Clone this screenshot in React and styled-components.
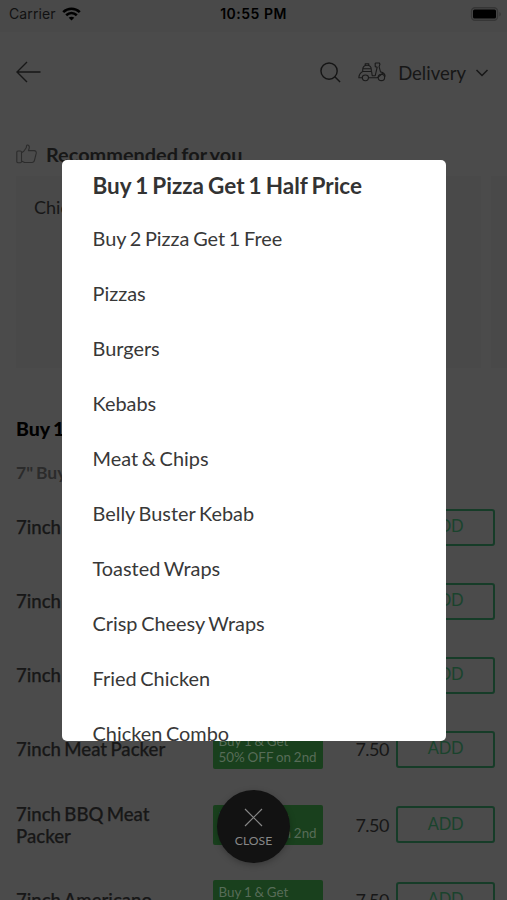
import React from 'react';
import styled, { createGlobalStyle, css } from 'styled-components';

const GlobalStyle = createGlobalStyle`
    body {
        margin: 0;
        overflow: hidden;
        font-family: Lato, sans-serif;
        word-spacing: -1.4px;
    }
    * {
        box-sizing: border-box;
    }
`;

const Screen = styled.div`
    position: relative;
    width: 507px;
    height: 900px;
    overflow: hidden;
    background-color: #4b4b4b;
    color: #171717;
`;

const StatusBar = styled.div`
    display: grid;
    grid-template-columns: 1fr auto 1fr;
    align-items: center;
    height: 32px;
    padding: 0 3px 5px 9px;
    background-color: #494949;
    color: #000;
    font-family: Inter, sans-serif;
    font-size: 14px;
    word-spacing: 0;
`;

const Carrier = styled.div`
    display: flex;
    align-items: center;
    gap: 6px;
    color: #111;
    letter-spacing: 0.1px;
`;

const Clock = styled.div`
    margin-right: 6px;
    font-weight: 600;
    letter-spacing: 0.5px;
`;

const Battery = styled.svg`
    justify-self: end;
`;

const Header = styled.header`
    display: flex;
    align-items: center;
    height: 80px;
    padding: 0 17px 0 16px;
`;

const Mode = styled.div`
    display: flex;
    align-items: center;
    margin-left: auto;
    font-size: 18.5px;
    color: #171717;
`;

const ModeLabel = styled.span`
    margin: 2px 8px 0 12px;
`;

const ScooterWrap = styled.span`
    display: flex;
    margin-left: 17px;
`;

const Recommended = styled.section`
    height: 256px;
    padding: 28px 0 0 16px;
`;

const RecommendedTitle = styled.h2`
    display: flex;
    align-items: center;
    gap: 9px;
    height: 27px;
    margin: 0;
    font-size: 19.9px;
    font-weight: 700;
`;

const RecommendedCards = styled.div`
    display: flex;
    gap: 10px;
    height: 192px;
    margin-top: 9px;
`;

const RecommendedCard = styled.div`
    width: 465px;
    flex-shrink: 0;
    padding: 20px 18px;
    background-color: #494949;
    font-size: 18px;
`;

const Category = styled.section`
    padding: 48px 12px 0 16px;
`;

const CategoryTitle = styled.h2`
    height: 26px;
    margin: 0;
    line-height: 26px;
    font-size: 19.5px;
    font-weight: 900;
    color: #000;
`;

const CategoryNote = styled.p`
    height: 24px;
    margin: 19px 0 5px;
    line-height: 24px;
    font-size: 17.5px;
    font-weight: 700;
    color: #2b2b2b;
`;

const Item = styled.div`
    display: grid;
    grid-template-columns: 196.5px 110px 73.5px 99px;
    align-items: center;
    height: ${(props) => (props.$twoLines ? '77px' : '74px')};
`;

const ItemName = styled.div`
    max-width: 165px;
    font-size: 18.6px;
    line-height: 22px;
    font-weight: 500;
    -webkit-text-stroke: 0.25px #171717;
`;

const Offer = styled.div`
    height: 40px;
    padding: 4px 6px;
    border-radius: 2px;
    background-color: #19401d;
    color: #576c58;
    font-size: 13.4px;
    line-height: 16px;
    word-spacing: -0.6px;
    white-space: nowrap;
`;

const Price = styled.div`
    padding-right: 7px;
    text-align: right;
    font-size: 18px;
    letter-spacing: -0.5px;
`;

const AddButton = styled.button`
    height: 37px;
    padding: 0 0 2px;
    border: 2px solid #163c28;
    border-radius: 3px;
    background: none;
    color: #1a432d;
    font-family: inherit;
    font-size: 16.5px;
    letter-spacing: -0.2px;
`;

const Menu = styled.nav`
    position: absolute;
    top: 160px;
    left: 62px;
    width: 384px;
    height: 581px;
    overflow: hidden;
    border-radius: 5px;
    background-color: #fff;
`;

const MenuItem = styled.div`
    height: 55px;
    padding: 0 30.5px;
    line-height: 54px;
    font-size: 19.9px;
    color: #383838;
    ${(props) => props.$active && css`
        height: 51px;
        line-height: 52px;
        font-size: 22.5px;
        font-weight: 700;
        color: #333;
    `}
`;

const CloseButton = styled.button`
    position: absolute;
    top: 790px;
    left: 217px;
    display: flex;
    flex-direction: column;
    align-items: center;
    gap: 6px;
    width: 73px;
    height: 73px;
    padding: 18px 0 0;
    border: none;
    border-radius: 50%;
    background-color: #121212;
    box-shadow: 0 2px 6px rgba(0, 0, 0, 0.25);
    color: #878787;
    font-family: inherit;
    font-size: 12.2px;
    line-height: 15px;
`;

const categories = [
    'Buy 1 Pizza Get 1 Half Price',
    'Buy 2 Pizza Get 1 Free',
    'Pizzas',
    'Burgers',
    'Kebabs',
    'Meat & Chips',
    'Belly Buster Kebab',
    'Toasted Wraps',
    'Crisp Cheesy Wraps',
    'Fried Chicken',
    'Chicken Combo',
];

const items = [
    { name: '7inch Margherita' },
    { name: '7inch Hawaiian' },
    { name: '7inch Vegetarian' },
    { name: '7inch Meat Packer' },
    { name: '7inch BBQ Meat Packer', twoLines: true },
    { name: '7inch Americano' },
];

const WifiIcon = () => (
    <svg width="19" height="14" viewBox="0 0 19 14" fill="none" stroke="#000" strokeWidth="2.6">
        <path d="M1.2 5.1C6 .6 13 .6 17.8 5.1" />
        <path d="M4.2 8.2c3.2-2.9 7.4-2.9 10.6 0" />
        <path d="M9.5 13.5 6.7 10.7c1.6-1.4 4-1.4 5.6 0z" fill="#000" stroke="none" />
    </svg>
);

const BackIcon = () => (
    <svg width="25" height="22" viewBox="0 0 25 22" fill="none" stroke="#171717" strokeWidth="1.4">
        <path d="M24.5 11H1M11 1 1 11l10 10" />
    </svg>
);

const SearchIcon = () => (
    <svg width="21" height="21" viewBox="0 0 22 22" fill="none" stroke="#151515" strokeWidth="1.5">
        <circle cx="9.5" cy="9.5" r="8.5" />
        <path d="m15.5 15.5 5.5 5.4" />
    </svg>
);

const ScooterIcon = () => (
    <svg width="28" height="20" viewBox="0 0 28 20" fill="none" stroke="#1a1a1a" strokeWidth="1.1" strokeLinejoin="round">
        <path d="M4.7 9.5V7.7c0-3 1.7-4.5 4.3-4.5s4.3 1.5 4.3 4.5v1.8zM7.2 3.3V1.8h3.6v1.5M4.7 6.8h8.6" />
        <path d="M17.2 1h4.2l.5 1.3-.8 2.4 1.4 5.2c2.6.6 4.5 2.2 4.7 4.7M17.2 1v3.6l2 .6-2 8.5h-3l-.6-4.2" />
        <path d="M4.7 9.5C2.5 10.7 1 13 .8 15.8h3.4M10.6 15.8h8.6l5.6-4.6" />
        <path d="M4.3 15.6a3.1 3.1 0 1 0 6.2 0c0-1.4-1.3-2.6-3.1-2.6s-3.1 1.2-3.1 2.6z" />
        <circle cx="23.4" cy="15.4" r="3.2" />
    </svg>
);

const ChevronIcon = () => (
    <svg width="16" height="10" viewBox="0 0 16 10" fill="none" stroke="#171717" strokeWidth="1.5">
        <path d="m2.5 3 5.5 5.5L13.5 3" />
    </svg>
);

const ThumbIcon = () => (
    <svg width="21" height="20" viewBox="0 0 21 20" fill="none" stroke="#2c2c2c" strokeWidth="1.1" strokeLinejoin="round">
        <path d="M2 7h2.3q1.2 0 1.2 1.2v9.3q0 1.2-1.2 1.2H2q-1.2 0-1.2-1.2V8.2Q.8 7 2 7zM5.5 8.7l2.3-1.5 2.4-3.4.4-2.1c.3-1.3 2.4-.6 2.7 1 .2 1.2-.2 2.3-.9 3.9h5.6c1.9 0 2.5 1.4 2.2 2.8l-1.7 6.8c-.3 1.5-1.2 2.3-2.6 2.3H8.5l-3-1.4" />
    </svg>
);

const CloseIcon = () => (
    <svg width="19" height="19" viewBox="0 0 19 19" stroke="#878787" strokeWidth="1.2">
        <path d="m1 1 17 17M18 1 1 18" />
    </svg>
);

const App = () => {
    return (
        <>
            <GlobalStyle />
            <Screen>
                <StatusBar>
                    <Carrier>Carrier <WifiIcon /></Carrier>
                    <Clock>10:55 PM</Clock>
                    <Battery width="34" height="14" viewBox="0 0 34 14">
                        <rect x="1.5" y=".8" width="26" height="12.4" rx="3.5" fill="none" stroke="#363636" strokeWidth="1.4" />
                        <rect x="3" y="2.5" width="23" height="9" rx="1.5" fill="#000" />
                        <path d="M29.5 5v4.4c1.6-.7 1.6-3.7 0-4.4z" fill="#333" />
                    </Battery>
                </StatusBar>
                <Header>
                    <BackIcon />
                    <Mode>
                        <SearchIcon />
                        <ScooterWrap><ScooterIcon /></ScooterWrap>
                        <ModeLabel>Delivery</ModeLabel>
                        <ChevronIcon />
                    </Mode>
                </Header>
                <Recommended>
                    <RecommendedTitle><ThumbIcon />Recommended for you</RecommendedTitle>
                    <RecommendedCards>
                        <RecommendedCard>Chicken</RecommendedCard>
                        <RecommendedCard />
                    </RecommendedCards>
                </Recommended>
                <Category>
                    <CategoryTitle>Buy 1 Pizza Get 1 Half Price</CategoryTitle>
                    <CategoryNote>7" Buy 1 Get 1 Half Price</CategoryNote>
                    {items.map((item) => (
                        <Item key={item.name} $twoLines={item.twoLines}>
                            <ItemName>{item.name}</ItemName>
                            <Offer>Buy 1 &amp; Get<br />50% OFF on 2nd</Offer>
                            <Price>7.50</Price>
                            <AddButton>ADD</AddButton>
                        </Item>
                    ))}
                </Category>
                <Menu>
                    {categories.map((name, index) => (
                        <MenuItem key={name} $active={index === 0}>{name}</MenuItem>
                    ))}
                </Menu>
                <CloseButton><CloseIcon />CLOSE</CloseButton>
            </Screen>
        </>
    );
};

export default App;
